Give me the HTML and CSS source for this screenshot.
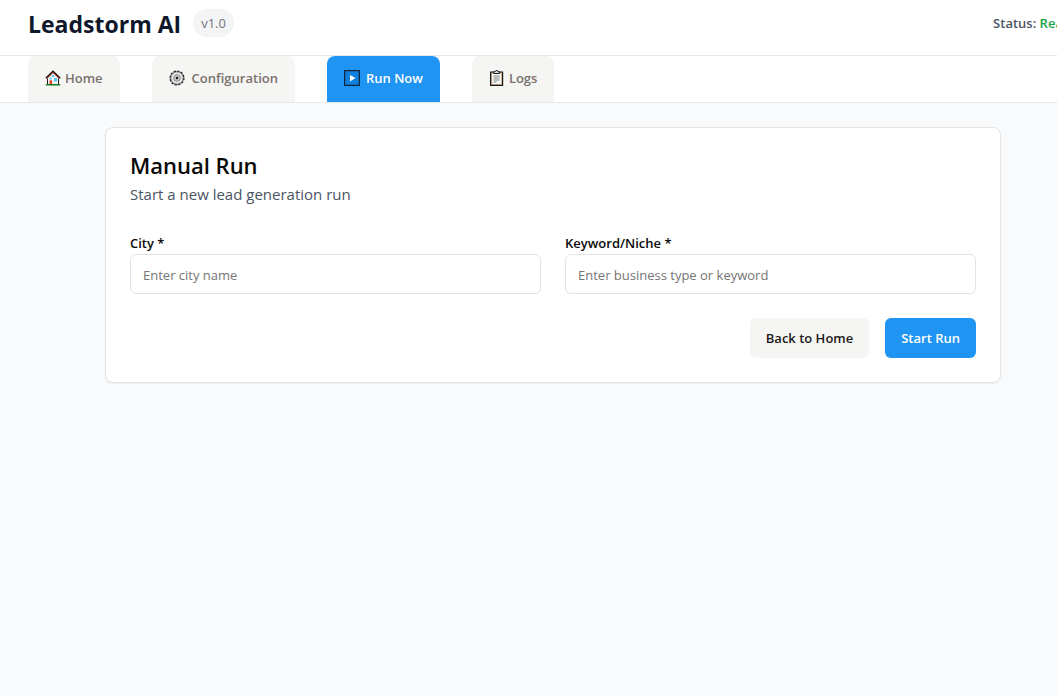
FILE: index.html
```html
<!DOCTYPE html>
<html lang="en">
<head>
<meta charset="utf-8">
<meta name="viewport" content="width=device-width, initial-scale=1">
<title>Leadstorm AI</title>
<link rel="stylesheet" href="styles.css">
</head>
<body>
<header class="header">
  <div class="brand">
    <h1 class="brand-name">Leadstorm AI</h1>
    <span class="version">v1.0</span>
  </div>
  <p class="status">Status: <span class="status-value">Ready</span></p>
</header>
<nav class="tabs">
  <button class="tab" type="button">
    <svg class="icon" viewBox="0 0 16 16" aria-hidden="true">
      <path d="M2.500 7.500 8 2.500l5.500 5V14.500h-11z" fill="#f2f6fa" stroke="#222" stroke-width="1"/>
      <path d="M.8 8.300 8 1.200l7.200 7.100" fill="none" stroke="#1d1010" stroke-width="1.500"/>
      <path d="M2 8.600 8 2.800l6 5.800" fill="none" stroke="#ef6a4a" stroke-width="1"/>
      <path d="M6.800 5h2.400v2H6.800zM4.500 7.800h2v1.700h-2zM9 8h3v3.500H9z" fill="#55c8f5"/>
      <path d="M4.500 10.300H7V14.500H4.500z" fill="#e8432d"/>
      <path d="M.8 14.800h14.400" stroke="#16801f" stroke-width="1.500"/>
    </svg>
    Home
  </button>
  <button class="tab" type="button">
    <svg class="icon icon-gear" viewBox="0 0 16 16" aria-hidden="true">
      <circle cx="8" cy="8" r="6.300" fill="#e4e4e4" stroke="#333" stroke-width=".8"/>
      <circle cx="8" cy="8" r="7" fill="none" stroke="#222" stroke-width="1.200" stroke-dasharray="2.300 1.365"/>
      <circle cx="8" cy="8" r="3.300" fill="#c4c4c4" stroke="#8a8a8a" stroke-width=".9"/>
      <circle cx="8" cy="8" r="1.200" fill="#151515"/>
    </svg>
    Configuration
  </button>
  <button class="tab tab-active" type="button" aria-current="page">
    <svg class="icon icon-play" viewBox="0 0 16 16" aria-hidden="true">
      <path d="M.6.6h14.800v14.800H.6z" fill="#0f7fdc" stroke="#10263c" stroke-width="1.200"/>
      <path d="M6 5l5.500 3L6 11.500z" fill="#fff"/>
    </svg>
    Run Now
  </button>
  <button class="tab" type="button">
    <svg class="icon" viewBox="0 0 16 16" aria-hidden="true">
      <path d="M1.600 2h12v13.400h-12z" fill="#d9b596" stroke="#1b1b1b" stroke-width="1.200"/>
      <path d="M3.200 3.500h8.800v10.500H3.200z" fill="#f6f7f8"/>
      <path d="M4.600 3.500V1.700h1.500L6.800.6h1.600l.7 1.100h1.500v1.800z" fill="#ddd" stroke="#1b1b1b" stroke-width="1"/>
      <path d="M4.600 6h6M4.600 8h6M4.600 10h6M4.600 12h3" stroke="#777" stroke-width=".9"/>
    </svg>
    Logs
  </button>
</nav>
<main class="main">
  <form class="card">
    <h2 class="card-title">Manual Run</h2>
    <p class="card-text">Start a new lead generation run</p>
    <div class="fields">
      <div class="field">
        <label class="label" for="city">City *</label>
        <input class="input" id="city" type="text" placeholder="Enter city name">
      </div>
      <div class="field">
        <label class="label" for="keyword">Keyword/Niche *</label>
        <input class="input" id="keyword" type="text" placeholder="Enter business type or keyword">
      </div>
    </div>
    <div class="actions">
      <button class="btn" type="button">Back to Home</button>
      <button class="btn btn-primary" type="submit">Start Run</button>
    </div>
  </form>
</main>
</body>
</html>
```
FILE: styles.css
```css
*, *::before, *::after { box-sizing: border-box; }

html {
  overflow-x: hidden;
  background: #f8fafc;
}

body {
  margin: 0;
  min-width: 1106px;
  color: #0a0a0a;
  font-family: "Segoe UI", "Open Sans", "Noto Sans", sans-serif;
  font-size: 13px;
  line-height: 20px;
}

h1, h2, p { margin: 0; }

button, input { font: inherit; }

.header {
  display: flex;
  justify-content: space-between;
  align-items: center;
  padding: 4px 28px 13px;
  background: #fff;
  border-bottom: 1px solid #e5e7eb;
}

.brand {
  display: flex;
  align-items: center;
  gap: 12px;
}

.brand-name {
  padding-top: 2px;
  color: #0f172a;
  font-size: 23px;
  font-weight: 700;
  line-height: 36px;
}

.version {
  padding: 4px 8px;
  border-radius: 14px;
  background: #f3f4f6;
  color: #73757a;
}

.status {
  color: #4b5563;
  font-weight: 600;
}

.status-value { color: #16a34a; }

.tabs {
  display: flex;
  gap: 32px;
  padding: 0 28px;
  background: #fff;
  border-bottom: 1px solid #e5e7eb;
}

.tab {
  display: flex;
  align-items: center;
  gap: 4px;
  padding: 12px 17px 14px;
  border: 0;
  border-radius: 8px 8px 0 0;
  background: #f5f5f4;
  color: #78716c;
  font-weight: 600;
}

.tab-active {
  background: #2094f3;
  color: #fff;
}

.icon {
  width: 16px;
  height: 16px;
}

.icon-gear { margin-right: 3px; }

.icon-play { margin-right: 2px; }

.main { padding: 24px; }

.card {
  max-width: 896px;
  margin: 0 auto;
  padding: 24px;
  background: #fff;
  border: 1px solid #e5e5e5;
  border-radius: 8px;
  box-shadow: 0 1px 2px rgba(0, 0, 0, 0.06);
}

.card-title {
  font-size: 22px;
  font-weight: 600;
  line-height: 26px;
}

.card-text {
  padding-top: 4px;
  color: #4b5563;
  font-size: 15px;
  line-height: 24px;
}

.fields {
  display: grid;
  grid-template-columns: 1fr 1fr;
  gap: 24px;
  padding: 26px 0 24px;
}

.field {
  display: flex;
  flex-direction: column;
}

.label {
  font-weight: 600;
  line-height: 22px;
}

.input {
  width: 100%;
  height: 40px;
  padding: 2px 12px 0;
  border: 1px solid #e2e2e2;
  border-radius: 6px;
  background: #fff;
  color: #0a0a0a;
}

.input::placeholder { color: #757575; }

.actions {
  display: flex;
  justify-content: flex-end;
  gap: 16px;
}

.btn {
  padding: 10px 16px;
  border: 0;
  border-radius: 6px;
  background: #f5f5f4;
  color: #1c1917;
  font-weight: 600;
}

.btn-primary {
  background: #2094f3;
  color: #fff;
}
```
